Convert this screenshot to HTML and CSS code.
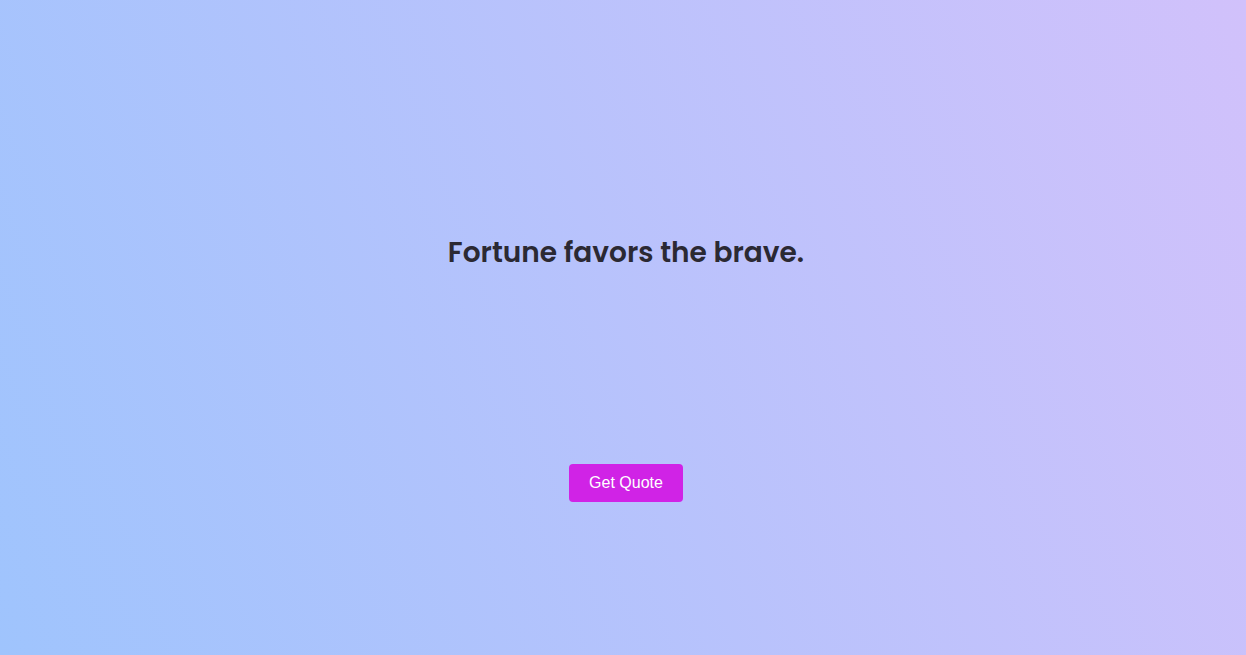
FILE: index.html
```html
<!DOCTYPE html>
<html lang="en">
<head>
<meta charset="utf-8">
<title>Quote</title>
<link rel="stylesheet" href="styles.css">
</head>
<body>
<main class="quote-page">
  <h1 class="quote-text">Fortune favors the brave.</h1>
  <button class="quote-btn" type="button">Get Quote</button>
</main>
</body>
</html>
```
FILE: styles.css
```css
html, body {
  margin: 0;
  padding: 0;
  height: 100%;
}
body {
  background: linear-gradient(70deg, #9fc4fd 0%, #d1c1fb 100%);
  font-family: "Liberation Sans", Arial, sans-serif;
}
.quote-page {
  min-height: 100vh;
  box-sizing: border-box;
  display: flex;
  flex-direction: column;
  align-items: center;
  padding-top: 232px;
  padding-left: 6px;
}
.quote-text {
  margin: 0;
  font-family: Poppins, Inter, "Open Sans", sans-serif;
  font-weight: 600;
  font-size: 28px;
  line-height: 42px;
  color: #2b2933;
}
.quote-btn {
  margin-top: 190px;
  background: #d023e6;
  color: #ffffff;
  border: none;
  border-radius: 4px;
  font-family: "Liberation Sans", Arial, sans-serif;
  font-size: 16px;
  line-height: 18px;
  padding: 10px 20px;
  cursor: pointer;
}
```
